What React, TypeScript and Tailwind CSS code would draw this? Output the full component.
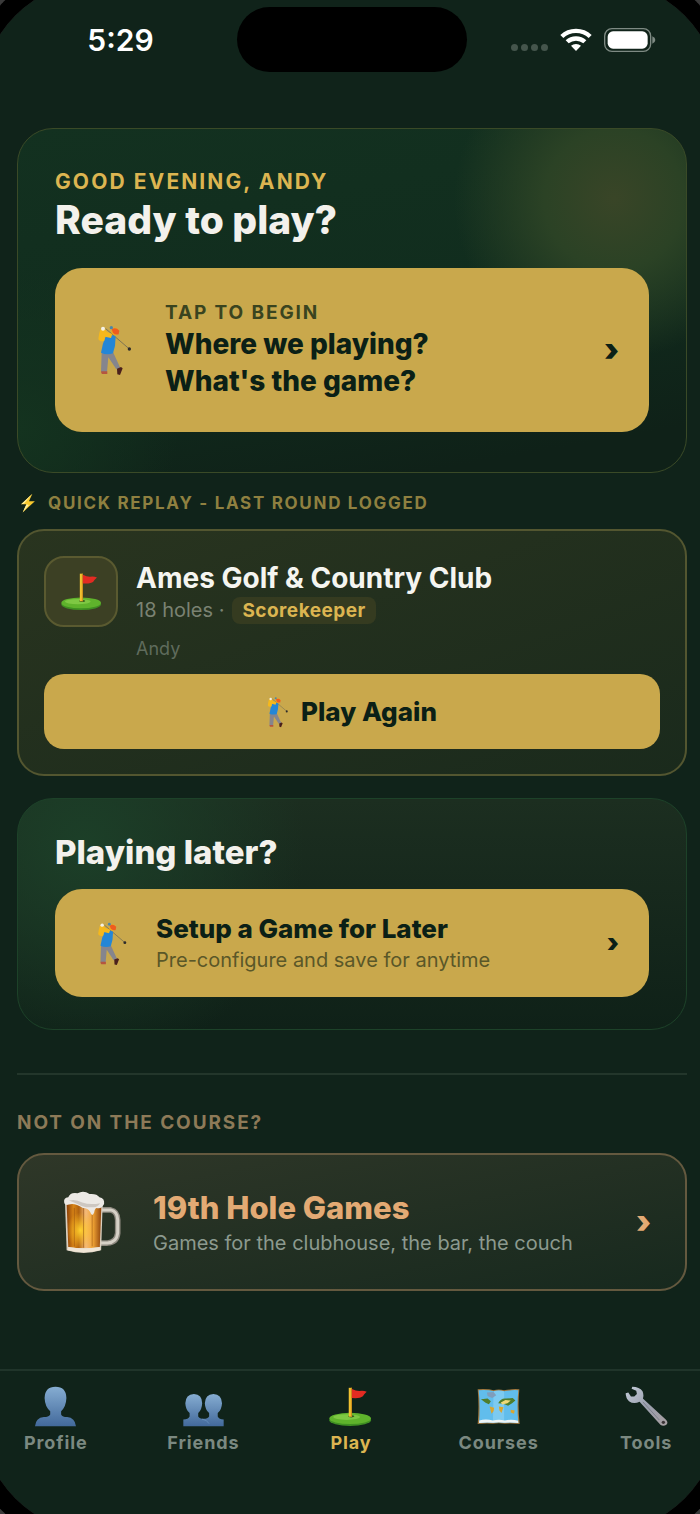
import React from 'react';

type IconProps = { className?: string };

function GolferIcon({ className }: IconProps) {
  return (
    <svg viewBox="36 42 108 156" className={className} aria-hidden="true">
      <path d="M62 56 L132 116" stroke="#6f6a55" strokeWidth="2.5" />
      <circle cx="133" cy="117" r="5" fill="#2c2a2a" />
      <path d="M50 128 L48 186 L66 186 L70 142 L94 178 L106 174 L84 126 Z" fill="#85858d" />
      <path d="M49 184 h18 v8 h-16 q-4 -3 -2 -8z" fill="#b5563f" />
      <path d="M96 176 l12 -5 5 4 -8 20 -8 -2z" fill="#4a201c" />
      <path d="M62 80 Q80 70 92 80 Q92 108 84 130 Q66 136 48 128 Q52 100 62 80z" fill="#2486d6" />
      <path d="M46 58 Q58 52 66 66 L82 72 L78 84 L60 80 L58 92 Q46 98 40 88 Q42 70 46 58z" fill="#f5b81c" />
      <circle cx="90" cy="64" r="11" fill="#f0a51e" />
      <path d="M80 58 Q92 50 103 62 L101 73 Q90 76 84 68z" fill="#ee5c1f" />
      <circle cx="54" cy="56" r="6" fill="#f4f1e6" />
      <circle cx="79" cy="53" r="5" fill="#4c86a8" />
    </svg>
  );
}

function FlagIcon({ className }: IconProps) {
  return (
    <svg viewBox="184 278 122 116" className={className} aria-hidden="true">
      <ellipse cx="244" cy="375" rx="59" ry="16" fill="#3f8f22" />
      <ellipse cx="244" cy="370" rx="59" ry="16" fill="#5fb32c" />
      <ellipse cx="234" cy="366" rx="38" ry="8" fill="#7ec843" />
      <ellipse cx="247" cy="364" rx="9" ry="3" fill="#35591c" />
      <path d="M240 283 h9 v82 h-9z" fill="#f2c230" />
      <path d="M246 283 h3 v82 h-3z" fill="#c98d1c" />
      <path d="M249 286 Q260 292 270 292 Q282 290 291 294 Q284 300 280 307 Q272 314 249 312z" fill="#e32b22" />
    </svg>
  );
}

function BoltIcon({ className }: IconProps) {
  return (
    <svg viewBox="60 36 50 64" className={className} aria-hidden="true">
      <path d="M99 38 L63 72 L80 72 L68 98 L107 62 L88 62 Z" fill="#f9c92e" />
      <path d="M99 38 L63 72 L72 70 Z M80 72 L68 98 L88 74 Z" fill="#fff0a0" />
    </svg>
  );
}

function BeerIcon({ className }: IconProps) {
  return (
    <svg viewBox="186 268 176 196" className={className} aria-hidden="true">
      <defs>
        <linearGradient id="beer" x1="0" x2="1">
          <stop offset="0" stopColor="#8a3f08" />
          <stop offset="0.2" stopColor="#d98516" />
          <stop offset="0.35" stopColor="#b0620f" />
          <stop offset="0.55" stopColor="#f4ba7a" />
          <stop offset="0.75" stopColor="#f2a535" />
          <stop offset="1" stopColor="#8d420c" />
        </linearGradient>
        <radialGradient id="beerGlow" cx="0.4" cy="0.6" r="0.4">
          <stop offset="0" stopColor="#ffd22e" />
          <stop offset="1" stopColor="#ffb81e" stopOpacity="0" />
        </radialGradient>
      </defs>
      <path d="M302 328 H332 Q352 332 353 358 V398 Q350 426 322 428 H302" fill="none" stroke="#8f8a80" strokeWidth="17" />
      <path d="M302 328 H332 Q352 332 353 358 V398 Q350 426 322 428 H302" fill="none" stroke="#d6d1c7" strokeWidth="9" />
      <path d="M194 302 H308 L303 450 Q250 466 199 450 Z" fill="#d9cfc0" />
      <path d="M199 308 H304 L299 440 Q250 448 204 440 Z" fill="url(#beer)" />
      <path d="M199 308 H304 L299 440 Q250 448 204 440 Z" fill="url(#beerGlow)" />
      <path d="M222 322 V438 M250 322 V442 M276 330 V438" stroke="#7c3d0c" strokeWidth="3" opacity="0.45" />
      <path d="M204 440 Q250 448 299 440 L300 450 Q250 462 202 450z" fill="#efe5d6" />
      <path d="M192 308 Q188 292 204 290 Q210 274 232 278 Q250 268 268 280 Q290 278 298 290 Q314 292 312 310 Q304 326 290 322 Q284 322 282 336 Q276 352 270 334 Q264 322 248 322 Q222 306 206 312 Q196 316 192 308z" fill="#ece9e5" />
      <path d="M206 300 Q226 294 246 306 Q270 314 300 308 Q292 322 276 320 Q250 322 232 310 Q216 304 206 300z" fill="#cdc7c1" />
    </svg>
  );
}

function ProfileIcon({ className }: IconProps) {
  return (
    <svg viewBox="108 76 126 124" className={className} aria-hidden="true">
      <defs>
        <linearGradient id="profile" x1="0" y1="0" x2="0" y2="1">
          <stop offset="0" stopColor="#86add2" />
          <stop offset="1" stopColor="#42699b" />
        </linearGradient>
      </defs>
      <path
        d="M171 78 Q203 78 204 112 Q203 138 188 152 V162 Q192 170 206 170 Q230 172 233 198 H109 Q111 172 136 170 Q150 170 155 162 V152 Q139 138 138 112 Q139 78 171 78z"
        fill="url(#profile)"
      />
    </svg>
  );
}

function FriendsIcon({ className }: IconProps) {
  return (
    <svg viewBox="550 76 126 124" className={className} aria-hidden="true">
      <defs>
        <linearGradient id="friends" x1="0" y1="0" x2="0" y2="1">
          <stop offset="0" stopColor="#86add2" />
          <stop offset="1" stopColor="#42699b" />
        </linearGradient>
      </defs>
      <path
        d="M584 100 Q609 101 609 128 Q608 148 597 158 V168 Q601 175 613 175 Q626 175 630 168 V158 Q618 148 617 128 Q618 101 643 100 Q668 101 669 128 Q668 148 656 158 V168 Q660 177 674 177 V198 H552 V177 Q567 177 571 168 V158 Q559 148 558 128 Q559 101 584 100z"
        fill="url(#friends)"
      />
      <path d="M608 176 Q624 178 630 190" fill="none" stroke="#6f98c4" strokeWidth="2" />
    </svg>
  );
}

function MapIcon({ className }: IconProps) {
  return (
    <svg viewBox="382 76 130 124" className={className} aria-hidden="true">
      <path d="M384 86 Q416 84 432 89 Q448 84 464 89 Q490 84 510 86 Q505 138 511 191 Q488 188 466 190 Q448 188 430 190 Q408 188 384 191 Q389 138 384 86z" fill="#a1783f" />
      <path d="M387 89 Q416 87 432 92 Q448 87 464 92 Q490 87 507 89 Q502 138 507 188 Q488 185 466 187 Q448 185 430 187 Q408 185 388 188 Q392 138 387 89z" fill="#61bdec" />
      <path d="M432 92 Q448 87 464 92 V187 Q448 185 430 187z" fill="#8fd2f4" opacity="0.6" />
      <path d="M412 96 L432 94 L440 104 L428 112 L414 106z" fill="#7f9dbb" />
      <path d="M394 116 L414 114 L424 122 L418 131 L408 127z M446 128 Q454 112 470 114 L490 112 L498 120 L488 128 L476 136 L462 130z" fill="#4f7d2c" />
      <path d="M454 126 L468 118 L484 120 L474 128 L458 132z" fill="#f0d978" />
      <path d="M420 138 L434 142 L432 152 L426 160z M448 138 L462 140 L456 158 L450 150z M484 148 L496 150 L494 160 L484 156z" fill="#d9a630" />
      <path d="M389 180 Q408 174 430 180 Q448 176 466 180 Q488 176 506 181 L507 188 Q488 185 466 187 Q448 185 430 187 Q408 185 388 188z" fill="#eef4f6" />
    </svg>
  );
}

function WrenchIcon({ className }: IconProps) {
  return (
    <svg viewBox="824 76 130 124" className={className} aria-hidden="true">
      <defs>
        <linearGradient id="wrench" x1="0" y1="0" x2="1" y2="1">
          <stop offset="0" stopColor="#c4ccd9" />
          <stop offset="0.5" stopColor="#9a9fad" />
          <stop offset="1" stopColor="#a79ea0" />
        </linearGradient>
      </defs>
      <path
        d="M846 78 Q868 78 877 92 Q882 104 878 114 L948 178 Q956 186 949 193 Q940 200 931 193 L868 124 Q850 132 836 122 Q826 112 826 98 L834 96 L842 108 L852 108 L860 100 L858 90 L844 84z"
        fill="url(#wrench)"
      />
      <path d="M878 124 L928 179" stroke="#7b7f8c" strokeWidth="3" />
      <circle cx="940" cy="186" r="5" fill="#3b3436" />
    </svg>
  );
}

function StatusBar() {
  return (
    <header className="grid grid-cols-[1fr_230px_1fr] place-items-center pt-[7px] pb-14 pl-1">
      <time className="text-[30px] leading-9 font-semibold text-white">5:29</time>
      <div className="h-[65px] w-full rounded-full bg-black" />
      <div className="flex items-center gap-3">
        <div className="mt-4 flex gap-[3px]">
          <span className="size-[7px] rounded-full bg-[#45554c]" />
          <span className="size-[7px] rounded-full bg-[#45554c]" />
          <span className="size-[7px] rounded-full bg-[#45554c]" />
          <span className="size-[7px] rounded-full bg-[#45554c]" />
        </div>
        <svg viewBox="0 0 96 72" className="h-6 w-8" role="img" aria-label="Wi-Fi">
          <path d="M48 2 Q76 2 95 21 L86 30 Q70 15 48 15 Q26 15 10 30 L1 21 Q20 2 48 2z" fill="#fff" />
          <path d="M48 25 Q66 25 79 37 L70 46 Q60 38 48 38 Q36 38 26 46 L17 37 Q30 25 48 25z" fill="#fff" />
          <path d="M48 48 Q57 48 63 53 L48 69 L33 53 Q39 48 48 48z" fill="#fff" />
        </svg>
        <svg viewBox="0 0 156 72" className="h-6 w-[52px]" role="img" aria-label="Battery">
          <rect x="2" y="2" width="138" height="68" rx="22" fill="none" stroke="#7e8a83" strokeWidth="4" />
          <rect x="11" y="10" width="120" height="52" rx="16" fill="#fff" />
          <path d="M145 25 Q154 29 154 36 Q154 43 145 47z" fill="#7e8a83" />
        </svg>
      </div>
    </header>
  );
}

function HeroCard() {
  return (
    <section className="rounded-[36px] border border-[#3a4a27] bg-[radial-gradient(circle_at_596px_70px,#394527_0,#2b4225_70px,transparent_160px),radial-gradient(circle_at_0px_300px,#14331f_0,transparent_160px),linear-gradient(170deg,#133120_0%,#112d1e_50%,#0f2118_90%)] px-[37px] py-10">
      <p className="text-[21px] leading-[26px] font-bold tracking-widest text-[#dcb551] uppercase">
        Good evening, Andy
      </p>
      <h1 className="text-[39px] leading-[49px] font-extrabold text-[#f3f1ec]">Ready to play?</h1>
      <button
        type="button"
        className="mt-6 flex w-full items-center gap-8 rounded-[27px] bg-[#c9a84c] py-8 pr-[30px] pl-[42px] text-left text-[#0b2016]"
      >
        <GolferIcon className="h-[52px] w-9 shrink-0" />
        <span className="flex-1">
          <span className="block text-[19px] leading-[26px] font-bold tracking-widest text-[#3a441f]">
            TAP TO BEGIN
          </span>
          <span className="block text-[28px] leading-[37px] font-extrabold">
            Where we playing?
            <br />
            What's the game?
          </span>
        </span>
        <span className="text-[32px] leading-none font-black">›</span>
      </button>
    </section>
  );
}

function QuickReplay() {
  return (
    <section className="mt-5">
      <h2 className="flex items-center gap-3 pl-[3px] text-[17px] leading-5 font-bold tracking-widest text-[#8f8040]">
        <BoltIcon className="h-5 w-4" />
        QUICK REPLAY - LAST ROUND LOGGED
      </h2>
      <div className="mt-4 rounded-[27px] border-2 border-[#535630] bg-linear-to-br from-[#29341f] to-[#1a2a1c] p-[25px]">
        <div className="flex gap-[18px]">
          <div className="flex h-[71px] w-[74px] shrink-0 items-center justify-center rounded-[20px] border-2 border-[#5a5a30] bg-[#3c4024]">
            <FlagIcon className="h-[39px] w-[41px]" />
          </div>
          <div className="pt-1">
            <h3 className="text-[28px] leading-9 font-bold text-[#f5f5f0]">Ames Golf &amp; Country Club</h3>
            <p className="flex items-center gap-2 text-[20px] leading-7 text-[#7a8272]">
              18 holes ·
              <span className="rounded-lg bg-[#353b20] px-[10px] text-[19px] leading-[27px] font-bold tracking-wide text-[#dcb551]">
                Scorekeeper
              </span>
            </p>
            <p className="mt-3 text-[18px] leading-[26px] text-[#5f6b5c]">Andy</p>
          </div>
        </div>
        <button
          type="button"
          className="mt-3 flex h-[75px] w-full items-center justify-center gap-3 rounded-[20px] bg-[#c9a84c] text-[26px] font-extrabold text-[#0b2016]"
        >
          <GolferIcon className="h-8 w-[22px]" />
          Play Again
        </button>
      </div>
    </section>
  );
}

function PlayLater() {
  return (
    <section className="mt-[22px] rounded-[36px] border border-[#1d4229] bg-[radial-gradient(circle_at_10%_20%,#1c3f28_0,transparent_220px),linear-gradient(180deg,#1c2e20_0%,#0f2118_100%)] px-[37px] py-8">
      <h2 className="text-[33px] leading-[42px] font-extrabold text-[#f3f1ec]">Playing later?</h2>
      <button
        type="button"
        className="mt-4 flex w-full items-center gap-7 rounded-[27px] bg-[#c9a84c] py-[23px] pr-[30px] pl-[42px] text-left text-[#0b2016]"
      >
        <GolferIcon className="h-[45px] w-[31px] shrink-0" />
        <span className="flex-1">
          <span className="block text-[26px] leading-[34px] font-extrabold">Setup a Game for Later</span>
          <span className="block text-[20px] leading-7 text-[#5a5728]">Pre-configure and save for anytime</span>
        </span>
        <span className="text-[26px] leading-none font-black">›</span>
      </button>
    </section>
  );
}

function NineteenthHole() {
  return (
    <section className="mt-[43px] border-t-2 border-[#23362b] pt-9">
      <h2 className="text-[19px] leading-6 font-bold tracking-widest text-[#8d7a58]">NOT ON THE COURSE?</h2>
      <button
        type="button"
        className="mt-[18px] flex w-full items-center gap-8 rounded-[27px] border-2 border-[#64593f] bg-linear-to-br from-[#2f3728] to-[#17291e] py-8 pr-[34px] pl-[43px] text-left"
      >
        <BeerIcon className="h-[65px] w-[59px] shrink-0" />
        <span className="flex-1">
          <span className="block text-[31px] leading-[42px] font-extrabold text-[#e3aa74]">19th Hole Games</span>
          <span className="block text-[20px] leading-7 text-[#8c9a8f]">Games for the clubhouse, the bar, the couch</span>
        </span>
        <span className="text-[32px] leading-none font-black text-[#e3aa74]">›</span>
      </button>
    </section>
  );
}

const tabs = [
  { label: 'Profile', Icon: ProfileIcon },
  { label: 'Friends', Icon: FriendsIcon },
  { label: 'Play', Icon: FlagIcon },
  { label: 'Courses', Icon: MapIcon },
  { label: 'Tools', Icon: WrenchIcon },
];

function TabBar() {
  return (
    <nav className="mt-auto -mr-5 -ml-[18px] grid grid-cols-5 border-t-2 border-[#20342a] pt-[15px] pb-[59px]">
      {tabs.map(({ label, Icon }) => (
        <a
          key={label}
          href={`#${label.toLowerCase()}`}
          aria-current={label === 'Play' ? 'page' : undefined}
          className={`flex flex-col items-center gap-1 text-[18px] leading-6 font-bold tracking-wider ${
            label === 'Play' ? 'text-[#dcb551]' : 'text-[#7b8981]'
          }`}
        >
          <Icon className="h-[41px] w-[43px]" />
          {label}
        </a>
      ))}
    </nav>
  );
}

function App() {
  return (
    <div className="relative flex min-h-screen flex-col overflow-hidden bg-[#10231a] font-['Inter',sans-serif]">
      <StatusBar />
      <main className="pr-[13px] pb-12 pl-[17px]">
        <HeroCard />
        <QuickReplay />
        <PlayLater />
        <NineteenthHole />
      </main>
      <TabBar />
      {/* Device bezel */}
      <div className="pointer-events-none absolute -inset-[18px] rounded-[114px] shadow-[0_0_0_18px_#000,0_0_0_60px_#3a3a3a]" />
    </div>
  );
}

export default App;
